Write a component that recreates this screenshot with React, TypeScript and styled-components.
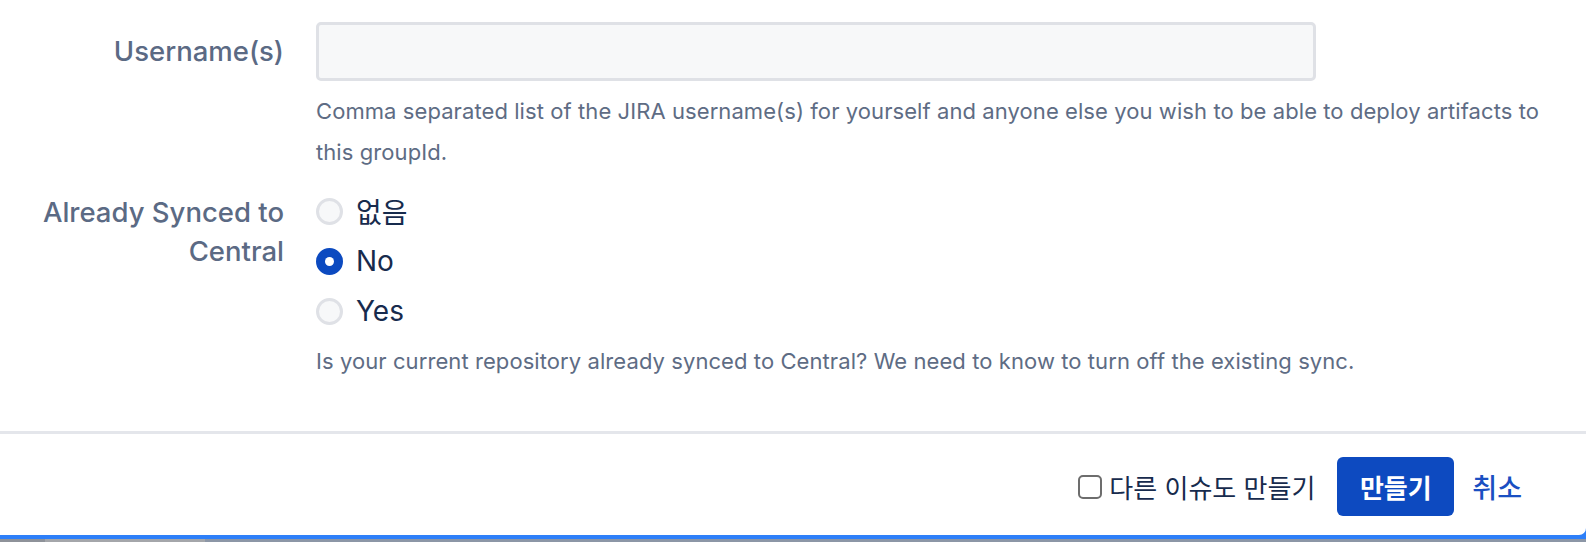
import styled, { createGlobalStyle } from "styled-components";

const GlobalStyle = createGlobalStyle`
    html, body {
        margin: 0;
        padding: 0;
        background: #8f97a6;
    }
    * {
        box-sizing: border-box;
    }
`;

const FONT = `Inter, "Noto Sans CJK KR", "Noto Sans", sans-serif`;

const Page = styled.div`
    width: 1586px;
    height: 542px;
    overflow: hidden;
    display: flex;
    flex-direction: column;
    font-family: ${FONT};
    background: #8f97a6;
`;

const Dialog = styled.div`
    background: #ffffff;
    border-bottom-right-radius: 7px;
    display: flex;
    flex-direction: column;
    position: relative;
    z-index: 1;
`;

const Content = styled.div`
    padding: 22px 0 49px 0;
    display: flex;
    flex-direction: column;
`;

const FieldRow = styled.div<{ $top?: number }>`
    display: grid;
    grid-template-columns: 284px 1fr;
    column-gap: 32px;
    margin-top: ${(p) => p.$top ?? 0}px;
`;

const Label = styled.label<{ $lineHeight: number; $padTop?: number }>`
    text-align: right;
    font-size: 27.5px;
    font-weight: 500;
    color: #5b6a84;
    line-height: ${(p) => p.$lineHeight}px;
    padding-top: ${(p) => p.$padTop ?? 0}px;
`;

const Field = styled.div`
    display: flex;
    flex-direction: column;
`;

const TextInput = styled.input`
    width: 1000px;
    height: 59px;
    border: 3px solid #dfe1e6;
    border-radius: 5px;
    background: #f7f8f9;
    font-family: ${FONT};
    font-size: 24px;
    padding: 0 12px;
    outline: none;
`;

const Help = styled.div<{ $top: number }>`
    margin-top: ${(p) => p.$top}px;
    max-width: 1240px;
    font-size: 22px;
    line-height: 41px;
    letter-spacing: 0.08px;
    color: #5e6c84;
`;

const RadioList = styled.div`
    display: flex;
    flex-direction: column;
`;

const RadioRow = styled.div`
    height: 50px;
    display: flex;
    align-items: center;
    gap: 13px;
    font-size: 28px;
    color: #172b4d;
`;

const RadioDot = styled.span<{ $checked?: boolean }>`
    width: 27px;
    height: 27px;
    border-radius: 50%;
    display: inline-flex;
    align-items: center;
    justify-content: center;
    background: ${(p) => (p.$checked ? "#0c4ac0" : "#f7f8f9")};
    border: 3px solid ${(p) => (p.$checked ? "#0c4ac0" : "#dfe1e6")};
    &::after {
        content: "";
        display: ${(p) => (p.$checked ? "block" : "none")};
        width: 9px;
        height: 9px;
        border-radius: 50%;
        background: #ffffff;
    }
`;

const Footer = styled.div`
    border-top: 3px solid #e4e6eb;
    padding: 23px 64px 19px 0;
    display: flex;
    justify-content: flex-end;
    align-items: center;
`;

const CheckLabel = styled.label`
    display: flex;
    align-items: center;
    gap: 7px;
    font-size: 26px;
    color: #172b4d;
    margin-right: 22px;
`;

const CheckBox = styled.span`
    width: 24px;
    height: 24px;
    border: 2px solid #6d6d6d;
    border-radius: 5px;
    background: #ffffff;
`;

const PrimaryButton = styled.button`
    width: 117px;
    height: 59px;
    border: none;
    border-radius: 6px;
    background: #0d4ac0;
    color: #ffffff;
    font-family: ${FONT};
    font-size: 26px;
    font-weight: 700;
    margin-right: 18px;
`;

const LinkButton = styled.button`
    border: none;
    background: none;
    padding: 0;
    color: #1a4fc2;
    font-family: ${FONT};
    font-size: 27px;
    font-weight: 500;
`;

const Backdrop = styled.div`
    flex: 1;
    margin-top: -8px;
    display: flex;
    flex-direction: column;
`;

const BlueBar = styled.div`
    height: 12px;
    background: #2d7ff9;
`;

const BackdropPanes = styled.div`
    flex: 1;
    display: flex;
`;

const BackdropPane = styled.div<{ $w?: number; $bg: string }>`
    ${(p) => (p.$w ? `width: ${p.$w}px;` : "flex: 1;")}
    background: ${(p) => p.$bg};
`;

const options = [
    { label: "없음", checked: false },
    { label: "No", checked: true },
    { label: "Yes", checked: false },
];

export default function App() {
    return (
        <>
            <GlobalStyle />
            <Page>
                <Dialog>
                    <Content>
                        <FieldRow>
                            <Label $lineHeight={59}>Username(s)</Label>
                            <Field>
                                <TextInput type="text" />
                                <Help $top={10}>
                                    Comma separated list of the JIRA username(s) for yourself and anyone else you wish to be able to deploy artifacts to this groupId.
                                </Help>
                            </Field>
                        </FieldRow>
                        <FieldRow $top={13}>
                            <Label $lineHeight={39} $padTop={7}>
                                Already Synced to
                                <br />
                                Central
                            </Label>
                            <Field>
                                <RadioList>
                                    {options.map((o) => (
                                        <RadioRow key={o.label}>
                                            <RadioDot $checked={o.checked} />
                                            {o.label}
                                        </RadioRow>
                                    ))}
                                </RadioList>
                                <Help $top={5}>
                                    Is your current repository already synced to Central? We need to know to turn off the existing sync.
                                </Help>
                            </Field>
                        </FieldRow>
                    </Content>
                    <Footer>
                        <CheckLabel>
                            <CheckBox />
                            다른 이슈도 만들기
                        </CheckLabel>
                        <PrimaryButton>만들기</PrimaryButton>
                        <LinkButton>취소</LinkButton>
                    </Footer>
                </Dialog>
                <Backdrop>
                    <BlueBar />
                    <BackdropPanes>
                        <BackdropPane $w={45} $bg="#8e9299" />
                        <BackdropPane $w={160} $bg="#a4a6aa" />
                        <BackdropPane $bg="#8c96a6" />
                    </BackdropPanes>
                </Backdrop>
            </Page>
        </>
    );
}
